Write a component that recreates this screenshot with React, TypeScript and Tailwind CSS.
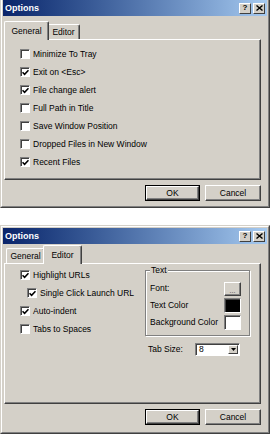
import React from 'react';

const face = "font-['Liberation_Sans',Arial,sans-serif]";

function Check({ checked }: { checked?: boolean }) {
  return (
    <span className="w-[10px] h-[10px] shrink-0 bg-white border border-[#808080] border-r-white border-b-white shadow-[inset_1px_1px_0_#404040] flex items-center justify-center">
      {checked && (
        <svg width="7" height="7" viewBox="0 0 7 7" className="ml-px mt-px">
          <path d="M0.5 3.2 L2.6 5.3 L6.5 1.2" fill="none" stroke="#000" strokeWidth="1.6" />
        </svg>
      )}
    </span>
  );
}

function Row({ label, checked, indent }: { label: string; checked?: boolean; indent?: boolean }) {
  return (
    <div className={`h-[18px] flex items-center gap-[3px] ${indent ? 'ml-[7px]' : ''}`}>
      <Check checked={checked} />
      <span className="text-[8.5px] leading-none">{label}</span>
    </div>
  );
}

function Tab({ label, active, w }: { label: string; active?: boolean; w: string }) {
  return (
    <div
      className={`${w} ${active ? 'h-[18px] -mb-px -mx-[2px] px-[2px] z-10 box-content' : 'h-[15px]'} relative bg-[#d4d0c8] border-t border-l border-white border-r border-r-[#404040] rounded-t-[2px] shadow-[inset_-1px_0_0_#808080] flex items-center justify-center text-[8.5px] leading-none`}
    >
      {label}
    </div>
  );
}

function Button({ label, primary }: { label: string; primary?: boolean }) {
  const inner = (
    <div className="h-full w-full border border-white border-r-[#404040] border-b-[#404040] shadow-[inset_-1px_-1px_0_#808080] flex items-center justify-center text-[8.5px] leading-none">
      {label}
    </div>
  );
  return primary ? (
    <div className="w-[55px] h-[16px] border border-black">{inner}</div>
  ) : (
    <div className="w-[56px] h-[16px]">{inner}</div>
  );
}

function Window({ cropTop, active, children }: { cropTop?: boolean; active: 'General' | 'Editor'; children: React.ReactNode }) {
  return (
    <div className={`w-[270px] bg-[#d4d0c8] border border-[#d4d0c8] border-r-[#404040] border-b-[#404040] ${cropTop ? 'border-t-0' : ''}`}>
      <div className={`border border-white border-r-[#808080] border-b-[#808080] px-px ${cropTop ? 'border-t-0 pb-[5px]' : 'pt-px pb-[7px]'}`}>
        <div className="h-[16px] flex items-center justify-between bg-linear-to-r from-[#0a246a] to-[#a6caf0] pl-[2px] pr-[2px]">
          <span className="text-white font-bold text-[9px] leading-none">Options</span>
          <div className="flex gap-[2px]">
            <div className="w-[12px] h-[11px] bg-[#d4d0c8] border border-white border-r-[#404040] border-b-[#404040] flex items-center justify-center text-[8px] font-bold leading-none">?</div>
            <div className="w-[12px] h-[11px] bg-[#d4d0c8] border border-white border-r-[#404040] border-b-[#404040] flex items-center justify-center">
              <svg width="7" height="6" viewBox="0 0 7 6">
                <path d="M0.5 0.5 L6.5 5.5 M6.5 0.5 L0.5 5.5" stroke="#000" strokeWidth="1.4" />
              </svg>
            </div>
          </div>
        </div>
        <div className="pl-px pr-[6px]">
          <div className={`flex items-end pl-[2px] ${cropTop ? 'mt-[5px]' : 'mt-px'}`}>
            <Tab label="General" active={active === 'General'} w="w-[39px]" />
            <Tab label="Editor" active={active === 'Editor'} w="w-[33px]" />
          </div>
          <div className="h-[141px] border border-white border-r-[#404040] border-b-[#404040] shadow-[inset_-1px_-1px_0_#808080]">
            {children}
          </div>
          <div className="flex justify-end gap-[5px] mt-[5px]">
            <Button label="OK" primary />
            <Button label="Cancel" />
          </div>
        </div>
      </div>
    </div>
  );
}

function Swatch({ color }: { color: string }) {
  return (
    <div className={`w-[17px] h-[15px] border border-[#808080] border-r-white border-b-white shadow-[inset_1px_1px_0_#404040] ${color}`} />
  );
}

export default function App() {
  return (
    <div className={`w-[270px] h-[434px] bg-white text-black ${face}`}>
      <Window cropTop active="General">
        <div className="pl-[15px] pt-[5px]">
          <Row label="Minimize To Tray" />
          <Row label="Exit on <Esc>" checked />
          <Row label="File change alert" checked />
          <Row label="Full Path in Title" />
          <Row label="Save Window Position" />
          <Row label="Dropped Files in New Window" />
          <Row label="Recent Files" checked />
        </div>
      </Window>
      <div className="mt-[17px]">
        <Window active="Editor">
          <div className="flex">
            <div className="flex-1 pl-[15px] pt-[2px]">
              <Row label="Highlight URLs" checked />
              <Row label="Single Click Launch URL" checked indent />
              <Row label="Auto-indent" checked />
              <Row label="Tabs to Spaces" />
            </div>
            <div className="w-[105px] mr-[10px] mt-[6px]">
              <div className="relative border border-[#808080] shadow-[inset_1px_1px_0_white,1px_1px_0_white] pl-[4px] pr-[8px] pt-[9px] pb-[4px]">
                <span className="absolute -top-[5px] left-[4px] bg-[#d4d0c8] px-px text-[8.5px] leading-none">Text</span>
                <div className="h-[17px] flex items-center justify-between">
                  <span className="text-[8.5px] leading-none">Font:</span>
                  <div className="w-[17px] h-[14px] border border-white border-r-[#404040] border-b-[#404040] shadow-[inset_-1px_-1px_0_#808080] flex items-end justify-center text-[7px] leading-[9px] text-[#404040]">...</div>
                </div>
                <div className="h-[17px] flex items-center justify-between">
                  <span className="text-[8.5px] leading-none">Text Color</span>
                  <Swatch color="bg-black" />
                </div>
                <div className="h-[17px] flex items-center justify-between">
                  <span className="text-[8.5px] leading-none">Background Color</span>
                  <Swatch color="bg-white" />
                </div>
              </div>
              <div className="flex items-center mt-[7px] pl-[3px]">
                <span className="w-[47px] text-[8.5px] leading-none">Tab Size:</span>
                <div className="w-[45px] h-[13px] bg-white border border-[#808080] border-r-white border-b-white shadow-[inset_1px_1px_0_#404040] flex items-center justify-between pl-[3px] pr-px">
                  <span className="text-[8.5px] leading-none">8</span>
                  <div className="w-[10px] h-[9px] bg-[#d4d0c8] border border-white border-r-[#404040] border-b-[#404040] flex items-center justify-center">
                    <svg width="5" height="3" viewBox="0 0 5 3">
                      <path d="M0 0 H5 L2.5 3 Z" fill="#000" />
                    </svg>
                  </div>
                </div>
              </div>
            </div>
          </div>
        </Window>
      </div>
    </div>
  );
}
